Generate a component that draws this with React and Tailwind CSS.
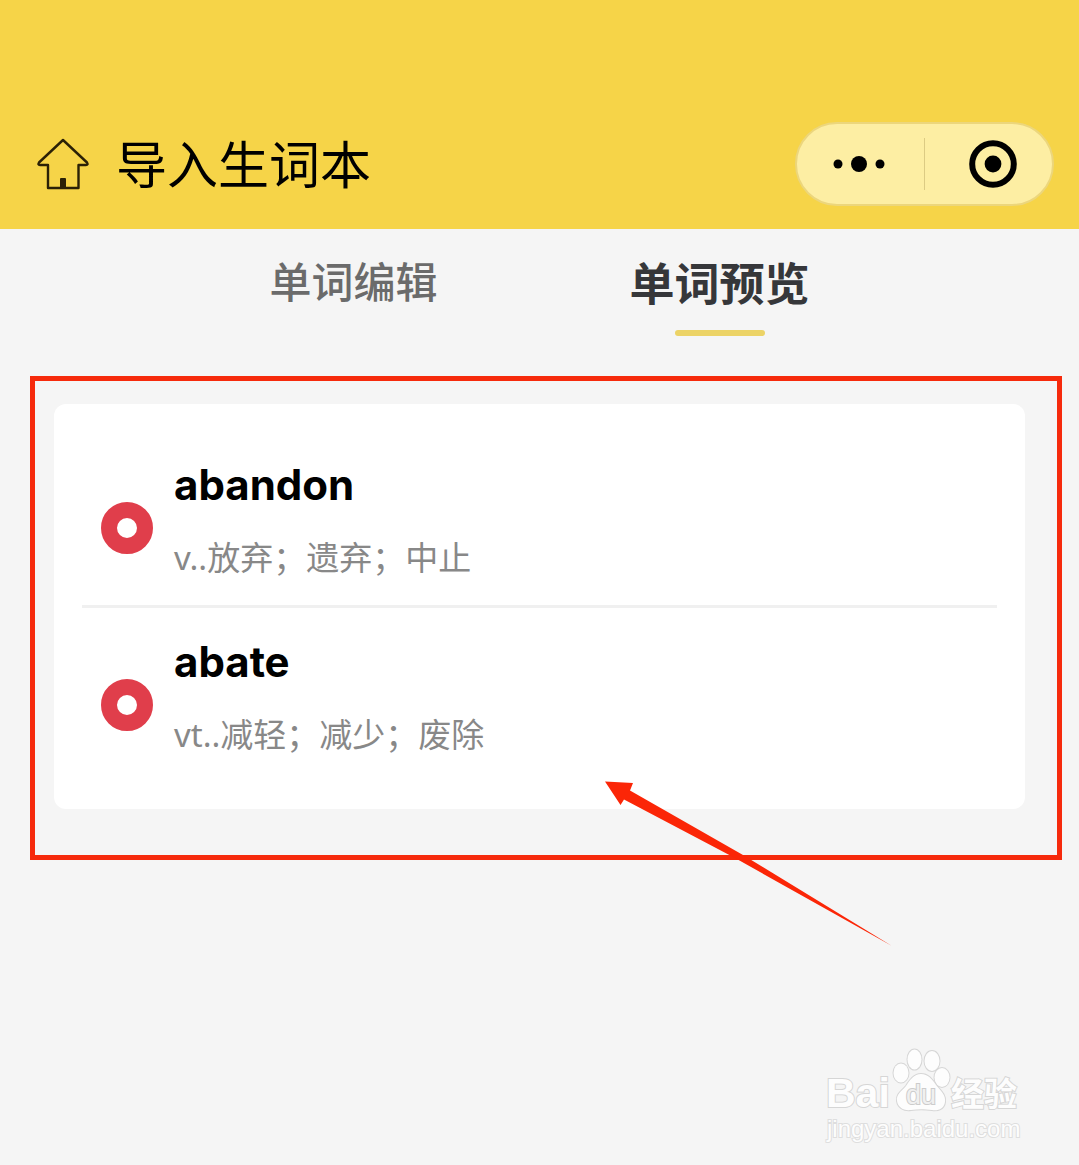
import React from 'react';

const words = [
    { word: 'abandon', meaning: 'v..放弃；遗弃；中止' },
    { word: 'abate', meaning: 'vt..减轻；减少；废除' },
];

const HomeIcon = () => (
    <svg viewBox="0 0 52 52" className="w-[52px] h-[52px]" fill="none">
        <path
            d="M26 2 L50 24.5 Q51.5 27 49 27 H41.5 V50 H11 V27 H3 Q0.5 27 2 24.5 Z"
            stroke="#2b2106"
            strokeWidth="2.4"
            strokeLinejoin="round"
        />
        <path d="M23 50 V41 Q23 40 24 40 H28 Q29 40 29 41 V50 Z" fill="#2b2106" />
    </svg>
);

const Header = () => (
    <header className="flex items-center bg-[#f6d448] pt-[122px] pb-[23px] pl-[37px] pr-[25px]">
        <a href="#home" aria-label="首页">
            <HomeIcon />
        </a>
        <h1 className="ml-[27px] flex-1 text-[51px] leading-[84px] text-black">导入生词本</h1>
        <div className="flex items-center w-[259px] h-[84px] rounded-full border-2 border-[#ecd67c] bg-[#fdeea3]">
            <button type="button" aria-label="更多" className="flex w-[127px] justify-center pr-1">
                <svg viewBox="0 0 52 18" className="w-[52px] h-[18px]">
                    <circle cx="5" cy="9" r="4.5" />
                    <circle cx="26" cy="9" r="8" />
                    <circle cx="47" cy="9" r="4.5" />
                </svg>
            </button>
            <span className="w-px h-[52px] bg-[#dccb83]" />
            <button type="button" aria-label="关闭" className="flex flex-1 justify-center pl-2">
                <svg viewBox="0 0 48 48" className="w-12 h-12">
                    <circle cx="24" cy="24" r="20.8" fill="none" stroke="#000" strokeWidth="6" />
                    <circle cx="24" cy="24" r="8.4" />
                </svg>
            </button>
        </div>
    </header>
);

const Tabs = () => (
    <nav className="flex justify-center gap-48 pt-[23px]">
        <button type="button" className="self-start text-[42px] leading-[60px] font-medium text-[#6b6b6b]">
            单词编辑
        </button>
        <button type="button" className="flex flex-col items-center text-[45px] leading-[64px] font-bold text-[#36373a]">
            单词预览
            <span className="mt-[14px] w-[90px] h-[6px] rounded-full bg-[#ecd366]" />
        </button>
    </nav>
);

const WordRow = ({ word, meaning }) => (
    <li className="flex items-center pt-6 pb-1 pl-[19px] border-b-[3px] border-[#f0f0f0] last:border-transparent">
        <svg viewBox="0 0 52 52" className="w-[52px] h-[52px]">
            <circle cx="26" cy="26" r="18" fill="none" stroke="#e03e4b" strokeWidth="16" />
        </svg>
        <div className="ml-[21px]">
            <h2 className="font-['Inter',sans-serif] text-[42px] leading-[60px] font-bold text-black">{word}</h2>
            <p className="text-[33px] leading-[86px] text-[#888888]">{meaning}</p>
        </div>
    </li>
);

const Arrow = () => (
    <svg viewBox="0 0 290 168" className="absolute left-[550px] top-[376px] w-[290px] h-[168px]">
        <path d="M1 1.5 L29 3 L26 10.5 L139 75 L288 166 L131 78 L20 19.5 L16.5 25 Z" fill="#fb2607" />
    </svg>
);

const Watermark = () => (
    <svg
        viewBox="0 0 200 100"
        className="absolute right-[56px] bottom-[20px] w-[200px] h-[100px]"
        fill="#fdfdfd"
        stroke="#d6d6d6"
        strokeWidth="2"
        paintOrder="stroke"
    >
        <g strokeWidth="2">
            <ellipse cx="78" cy="28" rx="7.5" ry="9.5" />
            <ellipse cx="91.5" cy="14.5" rx="7" ry="10" />
            <ellipse cx="109" cy="16" rx="7.5" ry="10" />
            <ellipse cx="119" cy="32.5" rx="7.5" ry="9.5" />
            <path d="M98 29 C105 29 109 34 113 40 C118 46 123 50 122 57 C121 64 115 66 109 65 C101 64 95 64 88 65 C80 66 75 62 74 56 C73 49 79 46 83 41 C87 35 91 29 98 29 Z" />
        </g>
        <text x="3" y="62" fontSize="41" fontWeight="700" fontFamily="Liberation Sans">Bai</text>
        <text x="83" y="59" fontSize="27" fill="#f0f0f0" stroke="#cccccc" fontFamily="Liberation Sans">du</text>
        <text x="128" y="61" fontSize="33" fontWeight="700" fontFamily="Noto Sans CJK SC">经验</text>
        <text x="4" y="92" fontSize="24" stroke="#dedede" fontFamily="Liberation Sans">jingyan.baidu.com</text>
    </svg>
);

const App = () => {
    return (
        <div className="relative min-h-screen bg-[#f5f5f5] font-['Noto_Sans','Noto_Sans_CJK_SC',sans-serif]">
            <Header />
            <Tabs />
            <main className="relative mx-[54px] mt-[68px]">
                <ul className="rounded-xl bg-white px-7 pt-[27px] pb-6">
                    {words.map((item) => (
                        <WordRow key={item.word} word={item.word} meaning={item.meaning} />
                    ))}
                </ul>
                <div className="absolute -top-7 -left-6 -right-[37px] -bottom-[51px] border-[5px] border-[#f62a0c]" />
                <Arrow />
            </main>
            <Watermark />
        </div>
    );
};

export default App;
